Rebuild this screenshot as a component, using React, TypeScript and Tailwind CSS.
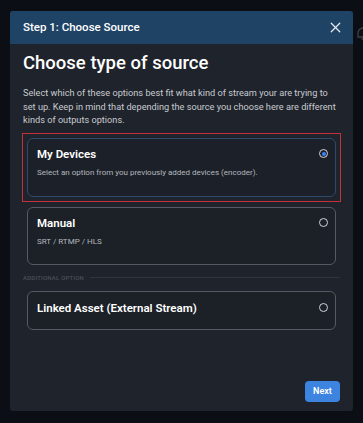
import { X } from "lucide-react"

type Option = {
  title: string
  description?: string
  selected?: boolean
}

const Radio = ({ checked }: { checked?: boolean }) => (
  <span className="flex h-[9px] w-[9px] items-center justify-center rounded-full border-[1.5px] border-[#d2d5da]">
    {checked && <span className="h-[4px] w-[4px] rounded-full bg-[#3b82f6]" />}
  </span>
)

const SourceCard = ({ option }: { option: Option }) => (
  <div
    className={
      option.selected
        ? "rounded-[6px] border border-[#2d4a6c] bg-[#1c2129] pt-[7px] pr-[7px] pb-[17px] pl-[9px]"
        : option.description
          ? "rounded-[6px] border border-[#565b63] bg-[#1c2027] pt-[7px] pr-[7px] pb-[16px] pl-[9px]"
          : "rounded-[6px] border border-[#565b63] bg-[#1c2027] pt-[8px] pr-[7px] pb-[13px] pl-[9px]"
    }
  >
    <div className="flex items-center justify-between">
      <h3 className="text-[11.5px] leading-[16px] font-semibold text-white">{option.title}</h3>
      <Radio checked={option.selected} />
    </div>
    {option.description && (
      <p className="mt-[5px] text-[8px] leading-[12px] text-[#b3b7bd]">{option.description}</p>
    )}
  </div>
)

export default function App() {
  return (
    <div
      className="relative h-[423px] w-[363px] overflow-hidden bg-[#0b0e15] pt-[11px] pl-[10px]"
      style={{ fontFamily: "Roboto, 'Liberation Sans', sans-serif" }}
    >
      {/* icono de la página de fondo, cortado por el borde */}
      <svg
        className="absolute top-[27px] left-[356px]"
        width="14"
        height="14"
        viewBox="0 0 14 14"
        fill="none"
        stroke="#3c414a"
        strokeWidth="1.3"
      >
        <path d="M2 10 V6 a5 5 0 0 1 10 0 V10 Z" />
        <path d="M5.5 12 h3" />
      </svg>

      <div className="flex h-[400px] w-[343px] flex-col overflow-hidden rounded-[3px] bg-[#1f232b]">
        {/* Header */}
        <div className="flex h-[33px] items-center justify-between bg-[#1f4365] pr-[9px] pl-[13px]">
          <span className="text-[11.5px] font-medium text-white">Step 1: Choose Source</span>
          <X className="size-[17px] text-[#e6e9ee]" strokeWidth={1.8} />
        </div>

        {/* Body */}
        <div className="flex flex-1 flex-col px-[13px] pt-[5px]">
          <h1 className="text-[18.5px] leading-[28px] font-medium text-white">Choose type of source</h1>
          <p className="mt-[9px] text-[9.2px] leading-[13.5px] text-[#c7cad0]">
            Select which of these options best fit what kind of stream your are trying to
            <br />
            set up. Keep in mind that depending the source you choose here are different
            <br />
            kinds of outputs options.
          </p>

          <div className="mt-[6px] flex flex-col gap-[5px] px-[4px]">
            <div className="-mx-[5px] border border-[#c2313c] p-[4px]">
              <SourceCard
                option={{
                  title: "My Devices",
                  description: "Select an option from you previously added devices (encoder).",
                  selected: true,
                }}
              />
            </div>
            <SourceCard option={{ title: "Manual", description: "SRT / RTMP / HLS" }} />
          </div>

          <div className="mt-[9px] flex items-center gap-[6px]">
            <span className="text-[6px] leading-[8px] font-medium tracking-[0.2px] text-[#4b5058] uppercase">
              Additional option
            </span>
            <div className="h-px flex-1 bg-[#30353d]" />
          </div>

          <div className="mt-[9px] px-[4px]">
            <SourceCard option={{ title: "Linked Asset (External Stream)" }} />
          </div>

          <div className="mt-auto flex justify-end pb-[9px]">
            <button className="h-[21px] w-[35px] rounded-[4px] bg-[#3c84e0] text-[9px] font-semibold text-white">
              Next
            </button>
          </div>
        </div>
      </div>
    </div>
  )
}
